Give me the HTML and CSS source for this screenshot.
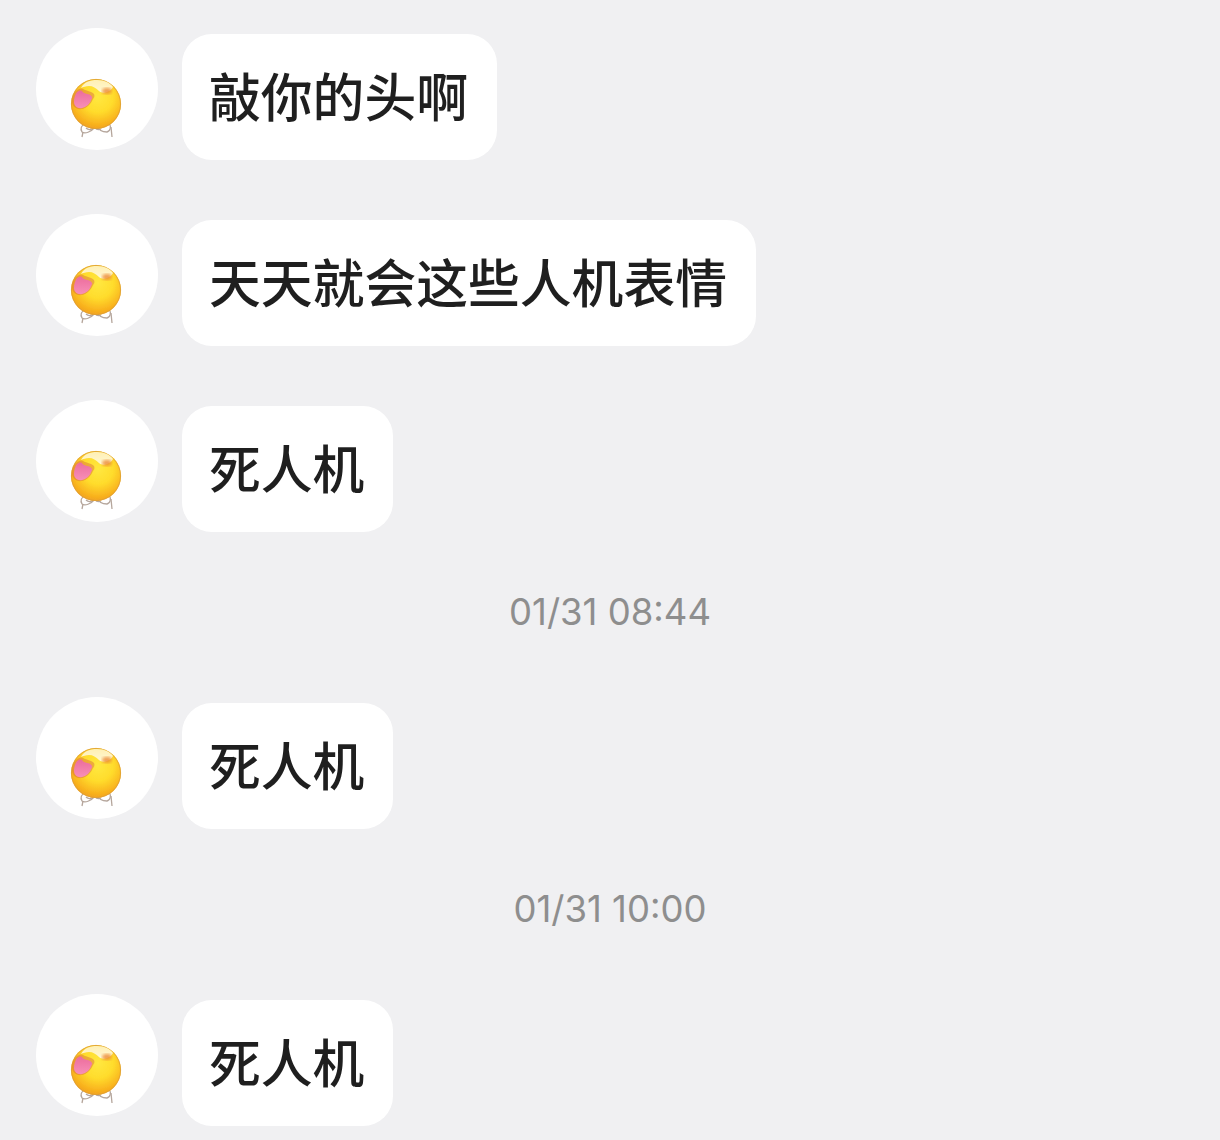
FILE: index.html
```html
<!DOCTYPE html>
<html>
<head>
<meta charset="utf-8">
<meta name="viewport" content="width=device-width, initial-scale=1">
<link rel="stylesheet" href="styles.css">
</head>
<body>
<div class="chat">

  <div class="row">
    <div class="avatar">
      <svg class="face" viewBox="0 0 122 122">
        <defs>
          <radialGradient id="ball" cx="54%" cy="36%" r="68%">
            <stop offset="0%" stop-color="#ffe840"/>
            <stop offset="45%" stop-color="#ffdc2c"/>
            <stop offset="80%" stop-color="#f9b31e"/>
            <stop offset="100%" stop-color="#ee9c22"/>
          </radialGradient>
          <linearGradient id="brow" x1="0" y1="0" x2="0" y2="1">
            <stop offset="0%" stop-color="#fff0b4"/>
            <stop offset="100%" stop-color="#fff7d2"/>
          </linearGradient>
          <linearGradient id="tongue" x1="0" y1="0" x2="0" y2="1">
            <stop offset="0%" stop-color="#ec6c9c"/>
            <stop offset="100%" stop-color="#f78fb8"/>
          </linearGradient>
          <filter id="soft"><feGaussianBlur stdDeviation="0.4"/></filter>
          <filter id="softer"><feGaussianBlur stdDeviation="1.8"/></filter>
          <symbol id="emoji" viewBox="0 0 122 122">
            <!-- little hands under the chin -->
            <g fill="none" stroke="#b5a69c" stroke-width="1.3" filter="url(#soft)">
              <path d="M50 95c-5 2-6 6-4 9 3 2 9 0 12-4 1-1 2-3 2-4"/>
              <path d="M47 104l-1 5M50 100c2 2 5 2 8 0"/>
              <path d="M60 97c2 4 6 7 11 7 4-1 4-6 2-9"/>
              <path d="M75 99l1 10M60 101c2 1 3 1 5 0"/>
            </g>
            <g filter="url(#soft)">
              <circle cx="60" cy="76" r="25" fill="url(#ball)"/>
              <circle cx="60" cy="76" r="24.6" fill="none" stroke="#dc9c34" stroke-width="1" opacity=".8"/>
              <!-- brow crescent -->
              <path d="M45 60c3-6 9-8 16-8 8 0 13 3 16 7-1 2-3 4-6 5-3 1-6 1-8-1-3-3-6-5-10-5-3 0-6 1-8 2z" fill="url(#brow)"/>
              <ellipse cx="71" cy="63" rx="5" ry="3.2" fill="#ec8a36" opacity=".8" filter="url(#softer)"/>
              <!-- tongue -->
              <path d="M40 63c2-2 5-3 7-2 4 2 8 2 11 5 1 2 0 4-1 5-2 5-6 9-11 10-6 1-10-3-10-8 0-4 2-8 4-10z" fill="#d8683c" opacity=".45"/>
              <path d="M41 64c2-1 3-2 5-1 1 2 3 2 5 3 2 0 4 1 5 3 0 1 0 2-1 3-1 4-5 7-9 8-4 1-8-2-8-6 0-4 1-7 3-10z" fill="url(#tongue)"/>
            </g>
          </symbol>
        </defs>
        <use href="#emoji"/>
      </svg>
    </div>
    <div class="bubble">敲你的头啊</div>
  </div>

  <div class="row">
    <div class="avatar"><svg class="face" viewBox="0 0 122 122"><use href="#emoji"/></svg></div>
    <div class="bubble">天天就会这些人机表情</div>
  </div>

  <div class="row">
    <div class="avatar"><svg class="face" viewBox="0 0 122 122"><use href="#emoji"/></svg></div>
    <div class="bubble">死人机</div>
  </div>

  <div class="time">01/31 08:44</div>

  <div class="row">
    <div class="avatar"><svg class="face" viewBox="0 0 122 122"><use href="#emoji"/></svg></div>
    <div class="bubble">死人机</div>
  </div>

  <div class="time">01/31 10:00</div>

  <div class="row">
    <div class="avatar"><svg class="face" viewBox="0 0 122 122"><use href="#emoji"/></svg></div>
    <div class="bubble">死人机</div>
  </div>

</div>
</body>
</html>
```

FILE: styles.css
```css
body {
  margin: 0;
  background-color: #f0f0f2;
  font-family: "Noto Sans CJK SC", "Noto Sans", sans-serif;
  overflow: hidden;
}

.chat {
  height: 1140px;
  padding-top: 28px;
  box-sizing: border-box;
}

.row {
  display: flex;
  align-items: flex-start;
  gap: 24px;
  height: 132px;
  padding-left: 36px;
  margin-bottom: 54px;
}

.avatar {
  width: 122px;
  height: 122px;
  border-radius: 50%;
  background-color: #fff;
  flex-shrink: 0;
}

.face {
  display: block;
  width: 122px;
  height: 122px;
}

.bubble {
  margin-top: 6px;
  padding: 0 29px 5px 27px;
  height: 121px;
  line-height: 121px;
  font-size: 51.8px;
  font-weight: 500;
  color: #1f1f1f;
  background-color: #fff;
  border-radius: 30px;
  white-space: nowrap;
}

.time {
  height: 57px;
  line-height: 53px;
  margin-bottom: 54px;
  text-align: center;
  font-family: Inter, sans-serif;
  font-size: 36.5px;
  color: #8e8e8e;
}
```
